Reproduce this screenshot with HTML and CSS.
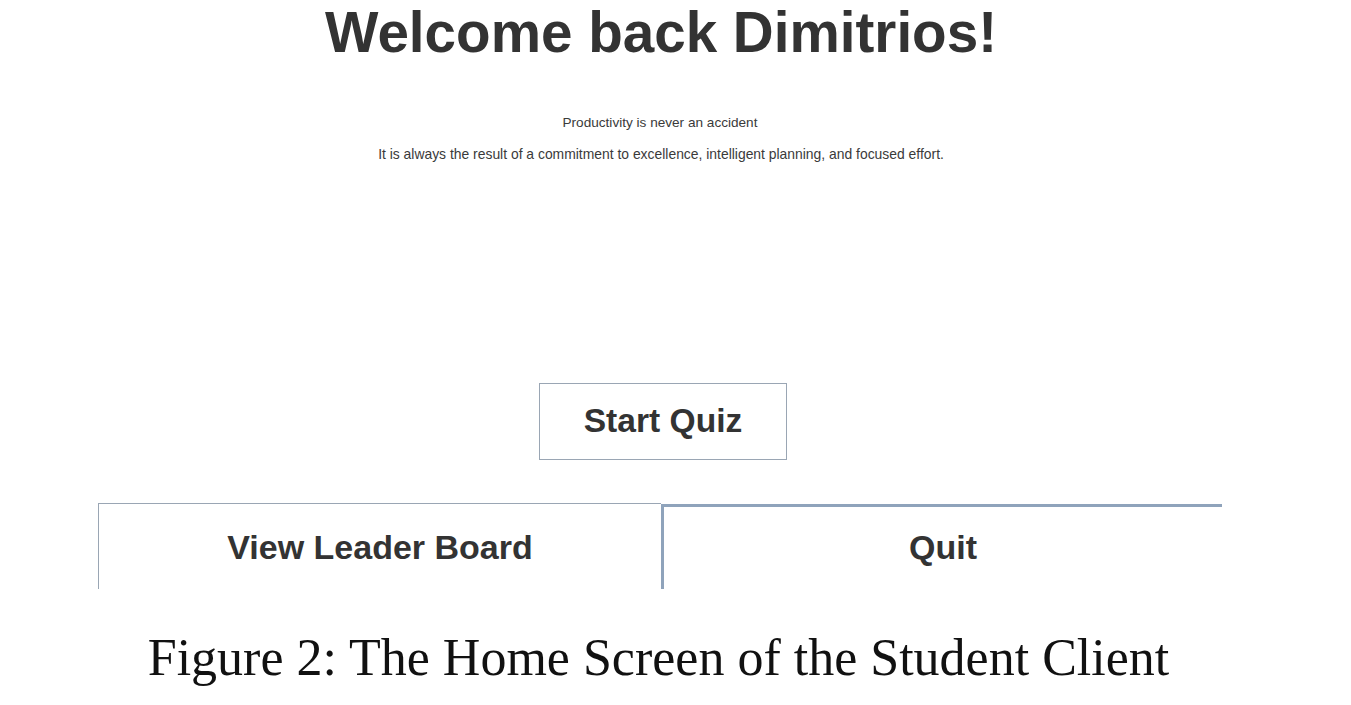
FILE: index.html
```html
<!DOCTYPE html>
<html lang="en">
<head>
<meta charset="utf-8">
<title>Home Screen of the Student Client</title>
<link rel="stylesheet" href="styles.css">
</head>
<body>
<figure class="figure">
  <div class="shot">
    <h1 class="welcome">Welcome back Dimitrios!</h1>
    <p class="quote quote-first">Productivity is never an accident</p>
    <p class="quote quote-second">It is always the result of a commitment to excellence, intelligent planning, and focused effort.</p>
    <div class="start-row">
      <button class="btn btn-start" type="button">Start Quiz</button>
    </div>
    <div class="bottom-row">
      <button class="btn btn-board" type="button">View Leader Board</button>
      <button class="btn btn-quit" type="button">Quit</button>
    </div>
  </div>
  <figcaption class="caption">Figure 2: The Home Screen of the Student Client</figcaption>
</figure>
</body>
</html>
```

FILE: styles.css
```css
html, body {
  margin: 0;
  padding: 0;
  background: #ffffff;
}

.figure {
  margin: 0;
  width: 1351px;
}

.shot {
  width: 1124px;
  height: 589px;
  margin-left: 98px;
  overflow: hidden;
  display: flex;
  flex-direction: column;
  align-items: center;
  font-family: "Liberation Sans", Arial, sans-serif;
  color: #333333;
}

.welcome {
  margin: 5px 0 0 2px;
  font-size: 56.6px;
  line-height: 56px;
  font-weight: bold;
  color: #333333;
}

.quote {
  margin: 0;
  font-size: 13.9px;
  line-height: 16px;
  color: #3a3a3a;
}

.quote-first {
  margin-top: 54px;
  margin-left: 0;
  font-size: 13.6px;
}

.quote-second {
  margin-top: 15px;
  margin-left: 2px;
}

.start-row {
  margin-top: 221px;
  display: flex;
  justify-content: center;
  margin-left: 6px;
}

.btn {
  font-family: "Liberation Sans", Arial, sans-serif;
  font-weight: bold;
  font-size: 34px;
  color: #333333;
  background: #ffffff;
  padding: 0;
  margin: 0;
  cursor: pointer;
}

.btn-start {
  width: 248px;
  height: 77px;
  font-size: 33.6px;
  border: 1px solid #9aa6b4;
  padding-bottom: 2px;
}

.bottom-row {
  margin-top: 43px;
  align-self: stretch;
  display: flex;
  align-items: flex-start;
}

.btn-board {
  width: 563px;
  height: 120px;
  border: none;
  border-top: 1px solid #9aa6b4;
  border-left: 1px solid #9aa6b4;
  padding-bottom: 33px;
}

.btn-quit {
  flex: 1;
  height: 120px;
  margin-top: 1px;
  border: none;
  border-top: 3px solid #8fa3bb;
  border-left: 3px solid #8fa3bb;
  padding-bottom: 37px;
}

.caption {
  margin-top: 39px;
  text-align: center;
  font-family: "Liberation Serif", "Times New Roman", serif;
  font-size: 52px;
  line-height: 60px;
  color: #111111;
  padding-right: 34px;
}
```
